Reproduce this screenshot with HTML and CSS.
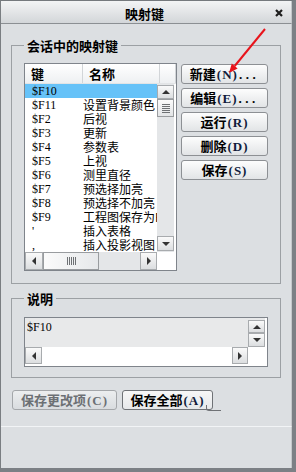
FILE: index.html
```html
<!DOCTYPE html>
<html lang="zh-CN">
<head>
    <meta charset="UTF-8">
    <meta name="viewport" content="width=device-width, initial-scale=1.0">
    <title>映射键</title>
    <link rel="stylesheet" href="styles.css">
</head>
<body>
    <div class="window">
        <div class="titlebar">
            <span></span>
            <span class="title">映射键</span>
            <span class="close">
                <svg width="8" height="8" viewBox="0 0 8 8"><path d="M1 1L7 7M7 1L1 7" stroke="#1e1e1e" stroke-width="2.2"/></svg>
            </span>
        </div>

        <div class="content">
            <!-- Mapa de teclas -->
            <fieldset class="group">
                <legend>会话中的映射键</legend>
                <div class="keys-row">
                    <div class="listbox">
                        <div class="list-head">
                            <div class="head-key">键</div>
                            <div class="head-name">名称</div>
                            <div class="head-rest"></div>
                        </div>
                        <div class="rows">
                            <div class="row selected"><span class="key">$F10</span><span class="name"></span></div>
                            <div class="row"><span class="key">$F11</span><span class="name">设置背景颜色</span></div>
                            <div class="row"><span class="key">$F2</span><span class="name">后视</span></div>
                            <div class="row"><span class="key">$F3</span><span class="name">更新</span></div>
                            <div class="row"><span class="key">$F4</span><span class="name">参数表</span></div>
                            <div class="row"><span class="key">$F5</span><span class="name">上视</span></div>
                            <div class="row"><span class="key">$F6</span><span class="name">测里直径</span></div>
                            <div class="row"><span class="key">$F7</span><span class="name">预选择加亮</span></div>
                            <div class="row"><span class="key">$F8</span><span class="name">预选择不加亮</span></div>
                            <div class="row"><span class="key">$F9</span><span class="name">工程图保存为PDF</span></div>
                            <div class="row"><span class="key">'</span><span class="name">插入表格</span></div>
                            <div class="row"><span class="key">,</span><span class="name">插入投影视图</span></div>
                        </div>
                        <div class="vscroll">
                            <div class="sb-btn up"></div>
                            <div class="sb-thumb vthumb"><span class="grip-h"></span></div>
                            <div class="sb-track"></div>
                            <div class="sb-btn down"></div>
                        </div>
                        <div class="list-pad"></div>
                        <div class="hscroll">
                            <div class="sb-btn left"></div>
                            <div class="sb-thumb hthumb"><span class="grip-v"></span></div>
                            <div class="sb-track"></div>
                            <div class="sb-btn right"></div>
                        </div>
                        <div class="corner"></div>
                    </div>

                    <div class="actions">
                        <button class="btn">新建<span class="mn">(N)</span><span class="dots">...</span></button>
                        <button class="btn">编辑<span class="mn">(E)</span><span class="dots">...</span></button>
                        <button class="btn">运行<span class="mn">(R)</span></button>
                        <button class="btn">删除<span class="mn">(D)</span></button>
                        <button class="btn">保存<span class="mn">(S)</span></button>
                    </div>
                </div>
            </fieldset>

            <!-- Descripción -->
            <fieldset class="group group-desc">
                <legend>说明</legend>
                <div class="textbox">
                    <div class="text-area">$F10</div>
                    <div class="text-vscroll">
                        <div class="sb-btn up"></div>
                        <div class="sb-btn down"></div>
                    </div>
                    <div class="text-side"></div>
                    <div class="text-hscroll">
                        <div class="sb-btn left"></div>
                        <div class="sb-track white"></div>
                        <div class="sb-btn right"></div>
                    </div>
                    <div class="corner"></div>
                </div>
            </fieldset>

            <div class="bottom-buttons">
                <button class="btn btn-wide disabled">保存更改项<span class="mn">(C)</span></button>
                <button class="btn btn-all">保存全部<span class="mn">(A)</span></button>
            </div>
        </div>

        <div class="footer"></div>

        <svg class="arrow" width="44" height="50" viewBox="0 0 44 50">
            <line x1="39" y1="3" x2="8.7" y2="40" stroke="#e8141c" stroke-width="2"/>
            <polygon points="3,47 11.6,42.4 5.8,37.6" fill="#e8141c"/>
        </svg>
    </div>
</body>
</html>
```

FILE: styles.css
```css
body {
    margin: 0;
    padding: 0;
    font-family: "Liberation Serif", "Noto Sans CJK SC", serif;
    font-size: 12px;
    color: #000;
}
.window {
    position: relative;
    width: 296px;
    height: 472px;
    box-sizing: border-box;
    display: flex;
    flex-direction: column;
    background-color: #dcdfe2;
    border-top: 1px solid #75797d;
    border-left: 1px solid #7a7e82;
    border-right: 4px solid #7c8085;
    border-bottom: 4px solid #7c8085;
}
.titlebar {
    height: 23px;
    display: grid;
    grid-template-columns: 1fr auto 1fr;
    align-items: center;
    padding-top: 2px;
    box-sizing: border-box;
    background: linear-gradient(#f3f4f5, #d3d6d9);
    border-bottom: 1px solid #8b8f93;
    border-right: 1px solid #c4c7ca;
}
.title {
    font-family: "Noto Sans CJK SC", sans-serif;
    font-weight: bold;
    font-size: 13px;
    line-height: 15px;
    margin-left: -3px;
}
.close {
    justify-self: end;
    margin-right: 8px;
    display: flex;
}
.content {
    flex: 1;
    padding: 14px 10px 0 10px;
    border-right: 1px solid #c4c7ca;
}
.group {
    margin: 0;
    padding: 10px 12px 12px 12px;
    border: 1px solid #9ca0a4;
    min-width: 0;
}
.group legend {
    padding: 0 3px;
    font-family: "Noto Sans CJK SC", sans-serif;
    font-weight: bold;
    font-size: 13px;
    line-height: 15px;
}
.group-desc {
    margin-top: 7px;
    padding: 11px 12px 10px 12px;
}
.keys-row {
    display: flex;
    gap: 4px;
    align-items: flex-start;
}

/* lista */
.listbox {
    width: 153px;
    height: 208px;
    box-sizing: border-box;
    border: 1px solid #7f848b;
    background: #fff;
    display: grid;
    grid-template-columns: 132px 17px 2px;
    grid-template-rows: 20px 168px 18px;
}
.list-head {
    grid-column: 1 / -1;
    display: flex;
    background: linear-gradient(#ffffff, #eef0f2);
    border-bottom: 1px solid #e2e4e6;
    font-family: "Noto Sans CJK SC", sans-serif;
    font-weight: bold;
    font-size: 13px;
    line-height: 19px;
}
.list-head div {
    border-right: 1px solid #d2d5d8;
    box-sizing: border-box;
}
.head-key {
    width: 58px;
    padding-left: 6px;
}
.head-name {
    width: 77px;
    padding-left: 6px;
}
.head-rest {
    flex: 1;
}
.rows {
    overflow: hidden;
}
.row {
    display: flex;
    height: 14px;
    line-height: 14px;
    white-space: nowrap;
}
.row.selected {
    background-color: #66c2f8;
}
.key {
    width: 58px;
    flex: none;
    padding-left: 7px;
    box-sizing: border-box;
}
.name {
    flex: 1;
    overflow: hidden;
    font-family: "Noto Sans CJK SC", sans-serif;
}

/* barras de desplazamiento */
.vscroll, .text-vscroll {
    display: flex;
    flex-direction: column;
    background: #e4e6e8;
}
.vscroll {
    padding-top: 1px;
}
.hscroll, .text-hscroll {
    display: flex;
    background: #e4e6e8;
}
.list-pad, .corner, .text-side {
    background: #fff;
}
.corner {
    grid-column: span 2;
}
.sb-btn {
    position: relative;
    box-sizing: border-box;
    border: 1px solid #a8abae;
    background: linear-gradient(#fafafa, #dcdee0);
}
.vscroll .sb-btn.up { height: 14px; }
.vscroll .sb-btn.down { height: 15px; margin-bottom: 1px; }
.hscroll .sb-btn.left { width: 18px; }
.hscroll .sb-btn.right { width: 17px; }
.sb-btn::after {
    content: "";
    position: absolute;
    left: 50%;
    top: 50%;
    width: 0;
    height: 0;
    border: 4px solid transparent;
}
.sb-btn.up::after {
    border-top: 0;
    border-bottom: 4px solid #333;
    transform: translate(-50%, -50%);
}
.sb-btn.down::after {
    border-bottom: 0;
    border-top: 4px solid #333;
    transform: translate(-50%, -50%);
}
.sb-btn.left::after {
    border-left: 0;
    border-right: 4px solid #333;
    transform: translate(-50%, -50%);
}
.sb-btn.right::after {
    border-right: 0;
    border-left: 4px solid #333;
    transform: translate(-50%, -50%);
}
.sb-track {
    flex: 1;
}
.sb-track.white {
    background: #fff;
}
.sb-thumb {
    box-sizing: border-box;
    border: 1px solid #999c9f;
    background: linear-gradient(#fbfbfb, #e2e4e6);
    display: flex;
    align-items: center;
    justify-content: center;
}
.vthumb {
    height: 18px;
}
.hthumb {
    width: 56px;
    background: linear-gradient(90deg, #fbfbfb, #e6e8ea);
}
.grip-h {
    width: 8px;
    height: 9px;
    background: repeating-linear-gradient(#6e7174 0 1px, transparent 1px 2px);
}
.grip-v {
    width: 9px;
    height: 8px;
    background: repeating-linear-gradient(90deg, #6e7174 0 1px, transparent 1px 2px);
}

/* botones */
.actions {
    display: flex;
    flex-direction: column;
    gap: 4px;
    padding-top: 1px;
}
.btn {
    position: relative;
    width: 87px;
    height: 20px;
    padding: 0;
    border: 1px solid #8d9094;
    border-radius: 3px;
    background: linear-gradient(#fdfdfd, #e2e4e6);
    font-family: "Liberation Serif", "Noto Sans CJK SC", serif;
    font-weight: bold;
    font-size: 13px;
    line-height: 17px;
    color: #000;
    white-space: nowrap;
}
.btn .mn {
    letter-spacing: 1px;
    margin-left: 1px;
    color: #111c3c;
}
.btn .dots {
    letter-spacing: 3.5px;
    margin-left: 1px;
}
.bottom-buttons {
    display: flex;
    gap: 5px;
    margin: 12px 0 0 1px;
}
.btn-wide {
    width: 105px;
}
.btn.disabled,
.btn.disabled .mn {
    color: #6c7074;
}
.btn.disabled {
    border-color: #a4a7aa;
    background: linear-gradient(#eceeef, #d9dcdf);
}
.btn-all {
    width: 91px;
    border-color: #6f7276;
    background: linear-gradient(#f7f7f7, #e6e8ea);
}
.btn-all::after {
    content: "";
    position: absolute;
    right: -9px;
    bottom: -2px;
    width: 14px;
    height: 5px;
    border-left: 1px solid #6f7276;
    border-bottom: 1px solid #6f7276;
    border-bottom-left-radius: 3px;
}

/* texto de descripción */
.textbox {
    width: 244px;
    height: 50px;
    box-sizing: border-box;
    border: 1px solid #7f848b;
    background: #fff;
    display: grid;
    grid-template-columns: 223px 17px 2px;
    grid-template-rows: 29px 17px 2px;
}
.text-area {
    background: #e8e9ea;
    padding: 2px 2px;
    line-height: 15px;
}
.text-vscroll {
    background: #e8e9ea;
    padding-top: 2px;
}
.text-vscroll .sb-btn.up { height: 13px; }
.text-vscroll .sb-btn.down { height: 14px; }
.text-hscroll .sb-btn.left { width: 17px; }
.text-hscroll .sb-btn.right { width: 16px; }
.textbox .corner {
    grid-column: 2 / -1;
}

.footer {
    height: 41px;
    border-top: 1px solid #f2f4f6;
    border-right: 1px solid #c4c7ca;
}
.arrow {
    position: absolute;
    left: 225px;
    top: 25px;
}
```
